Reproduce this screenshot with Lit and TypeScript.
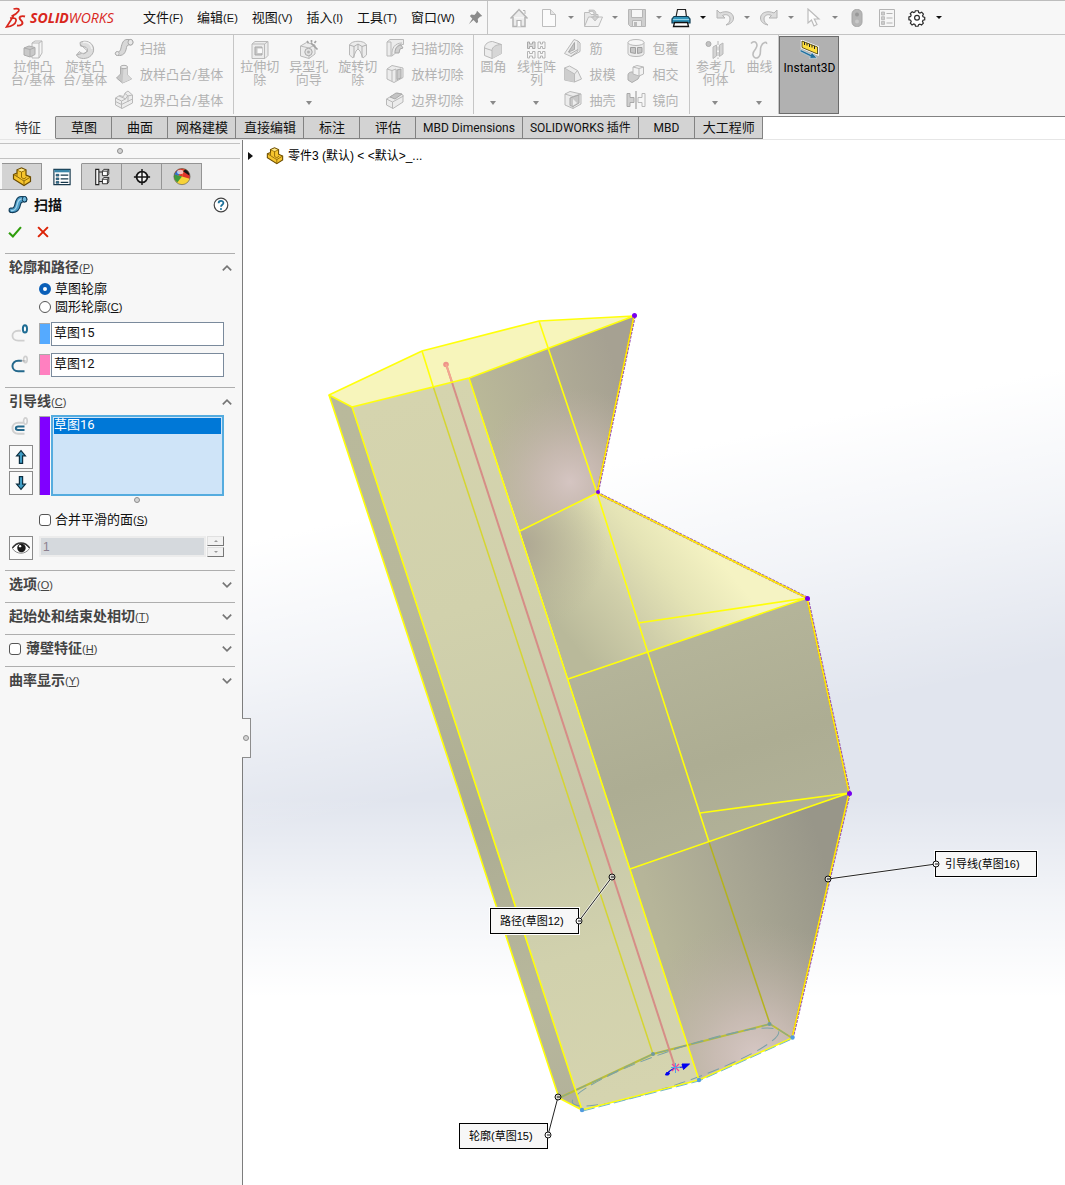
import { LitElement, html, svg, css, nothing, TemplateResult } from "lit";
import { customElement, property, state } from "lit/decorators.js";
import { classMap } from "lit/directives/class-map.js";
import { styleMap } from "lit/directives/style-map.js";

type Glyph = TemplateResult;

/* Shaded isometric pieces used by the greyed-out command icons. */
const G1 = "#ececec";
const G2 = "#d6d6d6";
const LN = "#b9b9b9";

const glyphs: Record<string, Glyph> = {
  home: svg`<path d="M1.5 10.5 10 1.5l8.500 9M4 9v9.500h12V9" fill="#ececec" stroke="#b4b4b4" stroke-width="1.500"/><path d="M14 2.500h2V6" fill="none" stroke="#b4b4b4"/><path d="M8 18.500v-6h4v6" fill="#fff" stroke="#b4b4b4" stroke-width="1.200"/>`,
  file: svg`<path d="M3.500 1.500h8l5 5v12h-13z" fill="#fbfbfb" stroke="#bdbdbd"/><path d="M11.500 1.500v5h5" fill="#e6e6e6" stroke="#bdbdbd"/>`,
  open: svg`<path d="M1.500 18V4.500h5l1.500 2h7V9" fill="#e8e8e8" stroke="#bdbdbd"/><path d="m1.500 18.500 4-9.500h14l-4 9.500z" fill="#f2f2f2" stroke="#bdbdbd"/><path d="M6 2h4c2 0 3 2 3 4v3h2.500L12 13 8.500 9H11V6c0-1.500-1-2.500-2.500-2.500H6z" fill="#d0d0d0" stroke="#b4b4b4" stroke-width=".7"/>`,
  save: svg`<path d="M1.500 1.500h17v17h-15l-2-2z" fill="#cfcfcf" stroke="#b6b6b6"/><path d="M4.500 1.500h11v8h-11z" fill="#f6f6f6" stroke="#b6b6b6"/><path d="M5.500 12.500h9v6h-9z" fill="#efefef" stroke="#b6b6b6"/><path d="M7 14h3v4.500H7z" fill="#bbb"/>`,
  print: svg`<path d="M5 9 6.500 1.500h8L15.500 9z" fill="#f7f7f7" stroke="#222" stroke-width="1.200"/><path d="M3 8.500h14l2 2.500v4H1v-4z" fill="#3193b8" stroke="#0d3b52" stroke-width="1.200"/><path d="M2 11.500h16" stroke="#8fd0e6"/><path d="M3.500 14.500h13l1 4h-15z" fill="#fff" stroke="#111" stroke-width="1.300"/>`,
  undo: svg`<path d="M2 2v8h8L7.500 7.500c4-2 7.500 0 7.500 3.500 0 2.500-1.500 4.500-4 6 5-1 7.500-3.500 7.500-7 0-5.500-7-8-13.500-5z" fill="#dcdcdc" stroke="#b4b4b4"/>`,
  redo: svg`<path d="M18 2v8h-8l2.500-2.500c-4-2-7.500 0-7.500 3.500 0 2.500 1.500 4.500 4 6-5-1-7.500-3.500-7.500-7 0-5.500 7-8 13.500-5z" fill="#dcdcdc" stroke="#b4b4b4"/>`,
  cursor: svg`<path d="M5 1v14l3.500-3 2.500 6 3-1.500-2.700-5.500H16z" fill="#fdfdfd" stroke="#bcbcbc" stroke-width="1.200"/>`,
  pill: svg`<rect x="5" y="1.500" width="10" height="17" rx="4.500" fill="#b5b5b5" stroke="#a6a6a6"/><circle cx="10" cy="6.500" r="2" fill="#989898"/><circle cx="10" cy="13.500" r="2" fill="#c9c9c9"/>`,
  list: svg`<path d="M2.500 1.500h15v17h-15z" fill="#f6f6f6" stroke="#b4b4b4"/><path d="M4.500 4h3v3h-3zM4.500 8.700h3v3h-3zM4.500 13.400h3v3h-3z" fill="#ccc" stroke="#b4b4b4" stroke-width=".8"/><path d="M9.500 5.500h6m-6 4.500h6m-6 5h6" stroke="#b4b4b4"/>`,
  gear: svg`<path d="M8.300 2.500h3.400l.5 2 1.500.7 2-1 2 2.200-1 1.900.6 1.300 1.900.6v2.800l-2 .6-.6 1.500 1 1.900-2.100 2-1.900-1-1.500.6-.6 1.900H8.500l-.6-2-1.500-.6-1.900 1.100-2-2.100 1-1.900-.7-1.500-2-.6V9.600l2-.5.6-1.500-1-1.800 2.200-2.100 1.800 1 1.400-.6z" transform="translate(1.200 .6) scale(.86)" fill="#fff" stroke="#2b2b2b" stroke-width="1.400"/><circle cx="10" cy="9.800" r="2.400" fill="#fff" stroke="#2b2b2b" stroke-width="1.200"/>`,
  pin: svg`<path d="m12 1 7 7-3 1-3 3 .5 4-2 1.500-4.200-4.200L1 19l4.800-7.200L2.500 8 4.500 6l4 .7L11 4z" fill="#8b8b8b"/>`,
  extrude: svg`<path d="m9 3 3-2h7v12l-3 5H9z" fill="#f5f5f5" stroke="${LN}"/><path d="M9 3h7v15M16 3l3-2" fill="none" stroke="${LN}"/><path d="m1 8 5-2 6 1.500v7L7 17l-6-2z" fill="#c9c9c9" stroke="#acacac"/><path d="m1 8 6 1.500 5-2M7 9.500V17" fill="none" stroke="#acacac"/>`,
  revolve: svg`<path d="M5 2.500C10-.5 17.500 2 18.500 8c1 6-4 10.500-10 10.500-3 0-6-1-7-3.500l3-3.500c2 2.500 6 2.500 7.500 0 1-2 0-4-2-4.500L5.500 6z" fill="#dcdcdc" stroke="#b0b0b0"/><path d="M5 4 12.500 11l-4 3M1.500 15l5-1.500" fill="none" stroke="#b0b0b0"/><path d="M8 2.500c5-1 8.500 2 9 6.500" fill="none" stroke="#f1f1f1" stroke-width="1.500"/>`,
  sweep: svg`<path d="M3.500 17.500c-2.500 0-3-3-1-3.700 3 .7 4-1 4.500-3.800C8 5 9.500 1.500 13 1.500h4c2.500 1 2.500 5 0 5.500-3-.5-4 0-4.500 2.500-1 6-3.500 8.500-9 8z" fill="#d8d8d8" stroke="#a9a9a9"/><ellipse cx="16.500" cy="4.200" rx="2.500" ry="2.800" fill="#e8e8e8" stroke="#a9a9a9"/><ellipse cx="3.300" cy="15.500" rx="1.800" ry="2" fill="#e8e8e8" stroke="#a9a9a9" stroke-width=".8"/>`,
  loft: svg`<path d="M6.500 3v7L2.500 14l6 5 9-4-4-4V3z" fill="#c6c6c6" stroke="#adadad"/><path d="M9.500 4.500 8.500 19l9-4-4-4V3z" fill="#d9d9d9"/><ellipse cx="10" cy="3" rx="3.500" ry="1.700" fill="#ececec" stroke="#adadad"/>`,
  boundary: svg`<path d="m1.500 8 4-2.500 4 1L11 3l3-2 4.500 4v8L8 18.500 1.500 15z" fill="${G1}" stroke="${LN}"/><path d="m1.500 8 6 3 4-2 2-3 5-1M7.500 11v7.500M5 6l7 3M1.500 11.500l6 3L18.500 9M11 3.500l3 2.500v6" fill="none" stroke="${LN}"/>`,
  cutExtrude: svg`<path d="m2 4 3-2.500h13v14L15 18.500H2z" fill="${G1}" stroke="${LN}"/><path d="M2 4h12.500v14.500M14.500 4 18 1.500" fill="none" stroke="${LN}"/><path d="M5 7h7v8H5z" fill="#c6c6c6" stroke="#a9a9a9"/><path d="M7.500 8.500H12V13H7.500z" fill="#fafafa"/>`,
  hole: svg`<path d="m1.500 6 6-3.500L16 5v9l-6 4.500L1.500 16z" fill="${G1}" stroke="${LN}"/><path d="m1.500 6 8.500 2 6-3M10 8v10.500" fill="none" stroke="${LN}"/><circle cx="9.500" cy="12" r="3.700" fill="#e2e2e2" stroke="#a9a9a9"/><circle cx="9.500" cy="12" r="1.500" fill="#b4b4b4"/><path d="m12 3 6.500 6.500M8 1l1.500 2M12.500 0v2.500M17 1l-1.500 2" stroke="#a2a2a2" stroke-width="1.700"/>`,
  cutRevolve: svg`<path d="M1.500 5c2-5 15-5 17 0v10l-3.500 3-3-7-2-2-2 2-3 7-3.500-3z" fill="${G1}" stroke="${LN}"/><path d="M1.500 5 6 6.500 10 4l4 2.500L18.500 5M6 6.500v11M14 6.500v11M10 4v5" fill="none" stroke="#b0b0b0"/>`,
  cutSweep: svg`<path d="m2 4 3-2.500h13.500v5C13 6 10 9 10.500 15l-3.500 3H2z" fill="${G1}" stroke="${LN}"/><path d="M2 4h4v14M7 17c-.5-7 3-12 10-12" fill="none" stroke="${LN}"/><path d="M10 15c-.5-4 3-8 6-8l2 3-3 1-1 4z" fill="#d0d0d0" stroke="#a9a9a9"/>`,
  cutLoft: svg`<path d="m2 5 5-3.500L18 4v9.500L9 18.500 2 15z" fill="${G1}" stroke="${LN}"/><path d="m2 5 5 1.500v11M7 6.500 11 5v12" fill="none" stroke="${LN}"/><path d="m12 6 4-1v9l-4 1.500z" fill="#cacaca" stroke="#a9a9a9"/>`,
  cutBoundary: svg`<path d="m1.500 9 5-3 4 1 2-4 5.500 2v7L8 18.500 1.500 15z" fill="${G1}" stroke="${LN}"/><path d="m1.500 9 6 3 11-6M7.500 12v6.500" fill="none" stroke="${LN}"/><path d="m5 7 6-4 6 1-7 5z" fill="#c4c4c4" stroke="#a9a9a9"/>`,
  fillet: svg`<path d="M1.500 8c0-4 4-6.500 8-6.500l9 3v9L9 18.500l-7.500-3z" fill="${G1}" stroke="${LN}"/><path d="M9 10.500c0-3.500 4-6 9.500-6v9L9 18.500z" fill="${G2}"/><path d="M1.500 8 9 10.500c0-3.500 4-6 9.500-6M9 10.500v8" fill="none" stroke="${LN}"/>`,
  pattern: svg`<path d="M1.500 2h2v2h3V2H9v6.500H6.500v-2h-3v2h-2z" fill="#dcdcdc" stroke="#a9a9a9"/><path d="M12 2h2.500v2h2V2H19v6.500h-2.500v-2h-2v2H12zM1.500 11.500h2v2h3v-2H9V18H6.500v-2h-3v2h-2zM12 11.500h2.500v2h2v-2H19V18h-2.500v-2h-2v2H12z" fill="#f8f8f8" stroke="#b4b4b4"/>`,
  rib: svg`<path d="m11 1.500 4 1.500v10l-7 5.500-6.500-3z" fill="#ededed" stroke="${LN}"/><path d="M11.500 4.500 5.500 14l6-2.500z" fill="#c4c4c4" stroke="#a9a9a9"/><path d="M15 3l2 2v8.500L8 18.500M5.500 14 8 15.500l7-4" fill="none" stroke="#b0b0b0"/>`,
  draft: svg`<path d="m1.500 4 5-2 8 4.500 4 8.500-7 3-10-2z" fill="${G1}" stroke="${LN}"/><path d="M1.500 4.500 11.500 10v8l-10-2z" fill="#cdcdcd"/><path d="m1.500 4 10 6 3-3.500M11.500 10v8" fill="none" stroke="${LN}"/>`,
  shell: svg`<path d="M2 4 7 1.500 18 4v10l-8 4.500-8-3.500z" fill="${G1}" stroke="${LN}"/><path d="m2 4 8 2.500L18 4M10 6.500v12" fill="none" stroke="${LN}"/><path d="m7 8 9-3v8l-6 3.500-3-1z" fill="#c8c8c8" stroke="#a9a9a9"/><path d="m10 9 4 4-4 2.500z" fill="#eee"/>`,
  wrap: svg`<path d="M2 4.500v11c0 4 16 4 16 0v-11" fill="${G1}" stroke="${LN}"/><ellipse cx="10" cy="4.500" rx="8" ry="3" fill="#f7f7f7" stroke="${LN}"/><path d="M4.500 9.500h5v6l-5-1zM11.500 9.500h4.500v5l-4.500 1z" fill="#c6c6c6" stroke="#a0a0a0"/>`,
  intersect: svg`<path d="M2 11c0-3 5-4 7-2l5 2-2 4-6 3.500L2 16z" fill="#cdcdcd" stroke="#adadad"/><path d="m7 3 4-1.500L17.500 3v7L13 12 7 10z" fill="#f2f2f2" stroke="${LN}"/><path d="m7 3 6 1.500L17.500 3M13 4.500V12" fill="none" stroke="${LN}"/>`,
  mirror: svg`<path d="M1 3.500h3v4h4v5H4v4H1z" fill="#cfcfcf" stroke="#a9a9a9"/><path d="M19 3.500h-3v4h-4v5h4v4h3z" fill="#f7f7f7" stroke="${LN}"/><path d="M10 1v18" stroke="#a2a2a2" stroke-width="1.200"/>`,
  refgeo: svg`<circle cx="3.500" cy="4" r="2.500" fill="#c2c2c2" stroke="#acacac"/><path d="m8 7 3.500-2v11L8 18.500zM14.500 5 18 3v11l-3.500 2.500z" fill="#d4d4d4" stroke="${LN}"/><path d="M13 1v18" stroke="#b4b4b4" stroke-dasharray="4 1.500"/>`,
  curves: svg`<path d="M2 3.500C6-1 10 4 6.500 9 1 15.500 6 19.500 9 17.500c4-2.500 1.500-7 3-11C14 2 18 1 17.500 4" fill="none" stroke="#bdbdbd" stroke-width="1.600"/>`,
  instant: svg`<path d="m3 1 15.500 6v7L3 7.500z" fill="#ffe14a" stroke="#fff" stroke-width="2.500"/><path d="m3 1 15.500 6v7L3 7.500z" fill="#ffdf3e" stroke="#3a3100" stroke-width=".8"/><path d="M5.500 2v3M8 3v2.500M10.500 4v3M13 5v2.500m2.500-1.500v3" stroke="#222" stroke-width="1"/><path d="m1.500 9.500 10.500 5 .8-2L18 18l-7.500.5 1-1.800L1 11.500z" fill="#1f6d9b" stroke="#d5e6ef" stroke-width=".6"/>`,
  part: svg`<path d="M1.500 7.500 5 6V3l4.500-2L14 3v5l4.500 2v4.500L12 18.500 1.500 12z" fill="#f6c52e" stroke="#6a4b00" stroke-width="1.200"/><path d="m1.500 7.500 3.500 2 4.500 3 2.500 1.500 6.500-4M12 14v4.500M5 3l4.500 2L14 3M9.500 5v5.500l2.500 1.500 2.500-2M5 6v3.500" fill="none" stroke="#8f6a09"/><path d="m5.800 3 3.700-1.500L13 3 9.500 4.500z" fill="#ffe98a"/>`,
  props: svg`<path d="M1 1.500h18v17H1z" fill="#fff" stroke="#17384c" stroke-width="1.300"/><path d="M1.500 2h17v2.800h-17z" fill="#3b86a8"/><path d="M3.500 7h3v2h-3zM3.500 11h3v2h-3zM3.500 15h3v2h-3z" fill="#2f7ea3" stroke="#17384c" stroke-width=".7"/><path d="M8.500 8H17m-8.500 4H17m-8.500 4H17" stroke="#17384c" stroke-width="1.300"/>`,
  config: svg`<path d="M3 1.500h3.500v17H3zM6.500 4.500H11M6.500 15H11" fill="#f6f6f6" stroke="#222" stroke-width="1.200"/><path d="m10.500 3.500 1.500-2h5.500v5L16 8.500h-5.500zM10.500 12.500l1.500-2h5.500v5l-1.500 2h-5.500zM10.500 3.500H16v5M16 3.500l1.500-2M10.500 12.500H16v5m0-5 1.500-2" fill="#fff" stroke="#222"/>`,
  target: svg`<circle cx="10" cy="10" r="6" fill="#f7f7f7" stroke="#161616" stroke-width="2"/><path d="M10 1v18M1 10h18" stroke="#161616" stroke-width="1.600"/>`,
  ball: svg`<circle cx="10" cy="9.500" r="9" fill="#f7d338"/><path d="M10 9.500 1.300 7A9 9 0 0 1 12 .8z" fill="#e0352b"/><path d="M10 9.500 1.300 7a9 9 0 0 0 3.500 9.200z" fill="#3f9b3c"/><path d="M10 9.500 12 .8A9 9 0 0 1 18.500 12z" fill="#e0352b"/><path d="M11 3.500 14 1.500a9 9 0 0 1 4.500 7z" fill="#161616"/><path d="m1.300 7 3.500-4.500L8 5 6 8.500z" fill="#3270c8"/><ellipse cx="8" cy="4.500" rx="3.500" ry="2.500" fill="#fff" opacity=".65"/><circle cx="10" cy="9.500" r="9" fill="none" stroke="#5a5a5a" stroke-width=".7"/>`,
  sweepBlue: svg`<path d="M3.500 17.500c-3 0-3-4-1-4.500 3 .7 4-1 4.500-3.800C8 4 9.500 1.500 13 1.500h4c2.500 1 2.500 5 0 5.500-3-.5-4 0-4.500 2.500-1 6-3.500 8.500-9 8z" fill="#4d9dc8" stroke="#123c58" stroke-width="1.200"/><path d="M3 15.500c4 .5 5.500-2 6.200-6 .6-3.500 2-5.500 4.800-5.500" fill="none" stroke="#9fd3ec" stroke-width="1.300"/><ellipse cx="16.500" cy="4.200" rx="2.300" ry="2.700" fill="#6cb5da" stroke="#123c58"/>`,
  help: svg`<circle cx="10" cy="10" r="8.500" fill="#fff" stroke="#444" stroke-width="1.500"/><path d="M7 7.800C7 3.800 13 4 13 7.500c0 2.200-3 2.200-3 4.700" fill="none" stroke="#1c7099" stroke-width="2.200"/><circle cx="10" cy="15" r="1.300" fill="#1c7099"/>`,
  ok: svg`<path d="m1.500 11 5.500 5.500L18.500 3" fill="none" stroke="#2f9e0c" stroke-width="3"/>`,
  cancel: svg`<path d="m3 3 14 14M17 3 3 17" fill="none" stroke="#dc2104" stroke-width="2.800"/>`,
  profile: svg`<path d="M15 18.500H8c-8.500 0-8.500-11 0-11h3" fill="none" stroke="#cfcfcf" stroke-width="2"/><ellipse cx="15.500" cy="5.500" rx="2.300" ry="4" fill="#fff" stroke="#1f6d94" stroke-width="2.200"/>`,
  path: svg`<path d="M15 18H8C-.5 18-.5 6.500 8 6.500h4" fill="none" stroke="#23688c" stroke-width="2.200"/><ellipse cx="16" cy="5" rx="2" ry="3.500" fill="none" stroke="#cfcfcf" stroke-width="1.800"/><path d="M10 6.500h6" stroke="#777" stroke-dasharray="1.500 1"/>`,
  guide: svg`<path d="M15 18.500H8c-8.500 0-8.500-12 0-12h6" fill="none" stroke="#d0d0d0" stroke-width="2.200"/><ellipse cx="16" cy="4.500" rx="2" ry="3.500" fill="none" stroke="#d0d0d0" stroke-width="1.800"/><path d="M15 14.500H8c-3.500 0-3.500-4 0-4h7" fill="none" stroke="#23688c" stroke-width="2.200"/>`,
  up: svg`<path d="m10 2 5.500 6.500H12V18H8V8.500H4.500z" fill="#3f9cc4" stroke="#0c2f42" stroke-width="1.500"/>`,
  down: svg`<path d="m10 18 5.500-6.500H12V2H8v9.500H4.500z" fill="#3f9cc4" stroke="#0c2f42" stroke-width="1.500"/>`,
  eye: svg`<path d="M.5 10.500C5 3 15 3 19.500 10.500 15 17.500 5 17.500.5 10.500z" fill="#fff" stroke="#777"/><path d="M.5 10C5 2.500 15 2.500 19.500 10" fill="none" stroke="#333" stroke-width="1.600"/><circle cx="10.500" cy="10" r="4.700" fill="#1a1a1a"/><circle cx="9" cy="8" r="1.300" fill="#fff"/>`,
  chevronUp: svg`<path d="m3 14 7-7 7 7" fill="none" stroke="#767676" stroke-width="2.800"/>`,
  chevronDown: svg`<path d="m3 6 7 7 7-7" fill="none" stroke="#767676" stroke-width="2.800"/>`,
};

const icon = (name: string, cls = "i20") =>
  html`<svg class=${cls} viewBox="0 0 20 20" aria-hidden="true">${glyphs[name]}</svg>`;

/* ------------------------------------------------------------------ menu bar */

@customElement("menu-bar")
class MenuBar extends LitElement {
  static styles = css`
    :host { display: flex; align-items: center; height: 33px; border-top: 1px solid #bdbdbd; border-bottom: 1px solid #c4c4c4; background: #f7f7f7; }
    * { box-sizing: border-box; }
    button { border: 0; background: none; padding: 0; font: inherit; color: #111; display: flex; align-items: center; justify-content: center; }
    .brand { display: flex; align-items: center; gap: 4px; width: 143px; padding-left: 5px; color: #d9261c; font: italic 700 14px/20px "Open Sans", sans-serif; flex: none; }
    .brand .thin { font-weight: 400; }
    .mark { width: 21px; height: 22px; flex: none; }
    .menus { display: flex; gap: 14px; padding-top: 1px; }
    .menus button { font-size: 13px; line-height: 18px; align-items: baseline; white-space: nowrap; }
    .key { font-family: "Liberation Sans", sans-serif; font-size: 11px; }
    .pin { width: 15px; height: 15px; margin-left: 13px; flex: none; }
    .rule { width: 1px; align-self: stretch; background: #c4c4c4; margin: 0 21px 0 4px; }
    .tools { display: flex; align-items: center; }
    .i20 { width: 20px; height: 20px; display: block; }
    .space { margin-right: 10px; }
    .drop { width: 24px; height: 20px; }
    .tri { border: 3px solid transparent; border-top: 3px solid #858585; border-bottom: 0; }
    .tri.dark { border-top-color: #111; }
  `;
  private menus = [["文件", "F"], ["编辑", "E"], ["视图", "V"], ["插入", "I"], ["工具", "T"], ["窗口", "W"]];
  private tools: { name: string; label: string; drop?: boolean; dark?: boolean }[] = [
    { name: "home", label: "主页" },
    { name: "file", label: "新建", drop: true },
    { name: "open", label: "打开", drop: true },
    { name: "save", label: "保存", drop: true },
    { name: "print", label: "打印", drop: true, dark: true },
    { name: "undo", label: "撤消", drop: true },
    { name: "redo", label: "重做", drop: true },
    { name: "cursor", label: "选择", drop: true },
    { name: "pill", label: "重建模型" },
    { name: "list", label: "文件属性" },
    { name: "gear", label: "设置", drop: true, dark: true },
  ];
  render() {
    return html`
      <div class="brand">
        <svg class="mark" viewBox="0 0 21 22" aria-hidden="true">
          <path d="M8.500 2c4-1 6.500 0 5 2.200C12.300 6 9.500 8 6.500 9.300" fill="none" stroke="#d9261c" stroke-width="1.700"/>
          <path d="M8.500 9 1.500 20c5.500-.8 9-3.500 9.500-6.200.5-2.500-2-3.300-6-2.800" fill="none" stroke="#d9261c" stroke-width="1.700"/>
          <path d="M20 9.500c-4-1.200-6.500.5-5 2.700l2 2.300c1.500 2.500-1 4.500-5 4" fill="none" stroke="#d9261c" stroke-width="1.900"/>
        </svg>
        <span>SOLID<span class="thin">WORKS</span></span>
      </div>
      <nav class="menus">
        ${this.menus.map(([t, k]) => html`<button>${t}<span class="key">(${k})</span></button>`)}
      </nav>
      ${icon("pin", "pin")}
      <div class="rule"></div>
      <div class="tools">
        ${this.tools.map((t) => html`
          <button class=${classMap({ space: !t.drop })} aria-label=${t.label}>${icon(t.name)}</button>
          ${t.drop ? html`<button class="drop" aria-label=${t.label + "选项"}><span class=${classMap({ tri: true, dark: !!t.dark })}></span></button>` : nothing}
        `)}
      </div>`;
  }
}

/* -------------------------------------------------------------------- ribbon */

interface Big { name: string; lines: string[]; size: string; drop?: boolean }
interface Group { big: Big[]; cols: [string, string][][] }

@customElement("command-ribbon")
class CommandRibbon extends LitElement {
  static styles = css`
    :host { display: flex; height: 81px; background: #f7f7f7; }
    * { box-sizing: border-box; }
    button { border: 0; background: none; padding: 0; font: 13px/13px "Roboto", "Noto Sans CJK SC", sans-serif; color: #b2b2b2; }
    .group { display: flex; height: 79px; border-right: 1px solid #c6c6c6; }
    .first { padding-left: 7px; }
    .second { padding-left: 1px; }
    .big { display: flex; flex-direction: column; align-items: center; padding: 5px 0 9px; white-space: nowrap; }
    .words span { display: block; }
    .w52 { width: 52px; } .w49 { width: 49px; } .w38 { width: 38px; } .w48 { width: 48px; } .w50 { width: 50px; }
    .i20 { width: 20px; height: 20px; display: block; flex: none; }
    .tri { margin-top: auto; border: 3px solid transparent; border-top: 4px solid #8a8a8a; border-bottom: 0; }
    .col { display: flex; flex-direction: column; padding: 0 10px 0 3px; }
    .third .col { padding-right: 11px; }
    .col + .col { padding-left: 0; }
    .small { display: flex; align-items: center; gap: 6px; height: 26px; white-space: nowrap; }
    .instant { width: 60px; height: 78px; margin-top: 1px; background: #b1b1b1; border: 1px solid #6c6c6c; color: #000; font-size: 12px; line-height: 14px; display: flex; flex-direction: column; align-items: center; padding-top: 3px; gap: 1px; }
  `;
  private groups: Group[] = [
    {
      big: [
        { name: "extrude", lines: ["拉伸凸", "台/基体"], size: "w52" },
        { name: "revolve", lines: ["旋转凸", "台/基体"], size: "w52" },
      ],
      cols: [[["sweep", "扫描"], ["loft", "放样凸台/基体"], ["boundary", "边界凸台/基体"]]],
    },
    {
      big: [
        { name: "cutExtrude", lines: ["拉伸切", "除"], size: "w49" },
        { name: "hole", lines: ["异型孔", "向导"], size: "w49", drop: true },
        { name: "cutRevolve", lines: ["旋转切", "除"], size: "w49" },
      ],
      cols: [[["cutSweep", "扫描切除"], ["cutLoft", "放样切除"], ["cutBoundary", "边界切除"]]],
    },
    {
      big: [
        { name: "fillet", lines: ["圆角"], size: "w38", drop: true },
        { name: "pattern", lines: ["线性阵", "列"], size: "w48", drop: true },
      ],
      cols: [
        [["rib", "筋"], ["draft", "拔模"], ["shell", "抽壳"]],
        [["wrap", "包覆"], ["intersect", "相交"], ["mirror", "镜向"]],
      ],
    },
    {
      big: [
        { name: "refgeo", lines: ["参考几", "何体"], size: "w50", drop: true },
        { name: "curves", lines: ["曲线"], size: "w38", drop: true },
      ],
      cols: [],
    },
  ];
  render() {
    return html`
      ${this.groups.map((g, i) => html`
        <div class=${classMap({ group: true, first: i === 0, second: i === 1, third: i === 2 })}>
          ${g.big.map((b) => html`
            <button class="big ${b.size}">
              ${icon(b.name)}
              <span class="words">${b.lines.map((l) => html`<span>${l}</span>`)}</span>
              ${b.drop ? html`<span class="tri"></span>` : nothing}
            </button>`)}
          ${g.cols.map((c) => html`
            <div class="col">${c.map(([n, t]) => html`<button class="small">${icon(n)}<span>${t}</span></button>`)}</div>`)}
        </div>`)}
      <button class="instant" aria-pressed="true">${icon("instant")}<span>Instant3D</span></button>`;
  }
}

/* ---------------------------------------------------------------- ribbon tabs */

@customElement("ribbon-tabs")
class RibbonTabs extends LitElement {
  static styles = css`
    :host { display: flex; height: 23px; background: #fff; }
    button { box-sizing: border-box; height: 23px; min-width: 56px; padding: 0 7px 0 8px; border: 1px solid #828282; border-left: 0; background: #d3d3d3; color: #111; font: 13px/20px "Roboto", "Noto Sans CJK SC", sans-serif; white-space: nowrap; }
    .latin { font-size: 12px; padding: 0 7px; }
    .on { background: #f7f7f7; border-color: #f7f7f7 #828282 #f7f7f7 #f7f7f7; color: #333; }
    .rest { flex: 1; border-top: 1px solid #828282; }
  `;
  @state() private active = 0;
  private tabs = ["特征", "草图", "曲面", "网格建模", "直接编辑", "标注", "评估", "MBD Dimensions", "SOLIDWORKS 插件", "MBD", "大工程师"];
  render() {
    return html`
      ${this.tabs.map((t, i) => html`
        <button class=${classMap({ on: i === this.active, latin: /[A-Z]/.test(t) })} @click=${() => (this.active = i)}>${t}</button>`)}
      <div class="rest"></div>`;
  }
}

/* ------------------------------------------------------------- property panel */

@customElement("panel-section")
class PanelSection extends LitElement {
  static styles = css`
    :host { display: block; margin: 0 7px 0 5px; border-top: 1px solid #aeaeae; padding-bottom: 6px; }
    :host([open]) { padding-bottom: 10px; }
    .head { display: flex; align-items: center; box-sizing: border-box; height: 25px; padding: 2px 2px 0 4px; color: #444; font: 700 14px/20px "Roboto", "Noto Sans CJK SC", sans-serif; }
    .key { font-family: "Liberation Sans", sans-serif; font-size: 11px; font-weight: 400; }
    .key u { text-underline-offset: 1px; }
    input { appearance: none; box-sizing: border-box; width: 12px; height: 12px; margin: 0 5px 0 0; border: 1px solid #555; border-radius: 3px; background: #fff; }
    button { margin-left: auto; border: 0; padding: 0; background: none; }
    .chev { width: 12px; height: 12px; display: block; }
  `;
  @property() label = "";
  @property() key = "";
  @property({ type: Boolean }) open = false;
  @property({ type: Boolean }) tick = false;
  render() {
    const text = html`${this.label}<span class="key">(<u>${this.key}</u>)</span>`;
    return html`
      <div class="head">
        ${this.tick ? html`<input id="tick" type="checkbox" /><label for="tick">${text}</label>` : html`<span>${text}</span>`}
        <button aria-label=${this.label}>${icon(this.open ? "chevronUp" : "chevronDown", "chev")}</button>
      </div>
      <slot></slot>`;
  }
}

@customElement("property-panel")
class PropertyPanel extends LitElement {
  static styles = css`
    :host { display: block; background: #f7f7f7; border-right: 1px solid #7d7d7d; position: relative; font: 13px/18px "Roboto", "Noto Sans CJK SC", sans-serif; color: #111; }
    * { box-sizing: border-box; }
    button { padding: 0; border: 0; background: none; display: flex; align-items: center; justify-content: center; }
    .grip { display: flex; align-items: center; justify-content: center; height: 16px; margin: 3px 2px 0 0; border: solid #c2c2c2; border-width: 1px 0; }
    .dot { width: 6px; height: 6px; border-radius: 50%; border: 1px solid #8d8d8d; background: #d4d4d4; }
    .tabs { display: flex; height: 27px; margin: 4px 2px 0 0; padding-left: 2px; border-bottom: 1px solid #a8a8a8; }
    .tabs button { width: 40px; height: 26px; background: #d3d3d3; border: 1px solid #949494; border-width: 1px 1px 0 0; }
    .tabs .on { background: #f7f7f7; border-top-color: #f7f7f7; height: 27px; }
    .i20 { width: 20px; height: 20px; }
    .i18 { width: 18px; height: 18px; }
    .i16 { width: 16px; height: 16px; }
    .i14 { width: 14px; height: 14px; }
    .title { display: flex; align-items: center; height: 30px; padding: 0 13px 0 8px; gap: 6px; font-size: 14px; font-weight: 700; }
    .title button { margin-left: auto; }
    .confirm { display: flex; gap: 14px; height: 33px; padding: 5px 0 0 8px; align-items: flex-start; }
    .option { display: flex; align-items: center; gap: 4px; height: 18px; padding: 1px 0 0 34px; white-space: nowrap; }
    .key { font-family: "Liberation Sans", sans-serif; font-size: 11px; }
    u { text-underline-offset: 1px; }
    .radio, .check { appearance: none; width: 12px; height: 12px; margin: 0; border: 1px solid #555; background: #fff; }
    .radio { border-radius: 50%; }
    .radio:checked { border: 4px solid #0a5fb8; }
    .check { border-radius: 3px; }
    .row { display: flex; align-items: flex-start; margin-top: 7px; padding: 0 11px 0 4px; }
    .lead { width: 30px; flex: none; padding: 2px 0 0 2px; height: 24px; }
    .swatch { width: 11px; height: 21px; margin-top: 1px; flex: none; border: 1px solid #a9a9a9; border-width: 1px 0 0 1px; }
    .pick { flex: 1; min-width: 0; height: 24px; margin: 0 0 0 1px; border: 1px solid #7a8a9c; background: #fff; padding: 0 2px 5px; font: 13px/16px "Roboto", "Noto Sans CJK SC", sans-serif; color: #111; }
    .guides { display: flex; margin-top: 2px; padding: 0 11px 0 4px; height: 81px; }
    .stack { display: flex; flex-direction: column; width: 30px; flex: none; gap: 2px; }
    .stack .icon { height: 28px; padding: 2px 0 0 2px; }
    .box { width: 24px; height: 24px; border: 1px solid #8a8a8a; background: #fafafa; flex: none; }
    .tall { height: 79px; }
    .options { flex: 1; margin: 0 0 0 1px; padding: 1px; list-style: none; border: 2px solid #55acdf; background: #cfe4f8; }
    .options li { height: 16px; padding: 0; line-height: 14px; background: #0078d7; color: #fff; }
    .drag { display: flex; justify-content: center; height: 14px; padding: 1px 0 0 34px; }
    .preview { display: flex; align-items: flex-start; margin-top: 8px; padding: 0 11px 0 4px; }
    .num { flex: 1; min-width: 0; height: 21px; margin: 0; border: 2px solid #ececec; background: #d5d9dd; color: #8b808e; font: 12px/16px "Liberation Sans", sans-serif; padding: 0 2px; }
    .gap { width: 6px; flex: none; }
    .spin { width: 17px; margin-left: 1px; }
    .spin button { width: 17px; height: 10px; border: 1px solid #e0e0e0; border-right-color: #777; border-bottom-color: #777; background: #f2f2f2; margin-bottom: 1px; }
    .tri { border: 2px solid transparent; border-bottom: 2px solid #999; border-top: 0; }
    .tri.dn { border-top: 2px solid #999; border-bottom: 0; }
    .handle { position: absolute; left: 100%; top: 578px; width: 9px; height: 40px; border: 1px solid #8d8d8d; border-left: 0; background: #f7f7f7; z-index: 2; }
  `;
  render() {
    return html`
      <div class="grip"><span class="dot"></span></div>
      <div class="tabs">
        <button aria-label="设计树">${icon("part")}</button>
        <button class="on" aria-label="属性">${icon("props", "i18")}</button>
        <button aria-label="配置">${icon("config", "i18")}</button>
        <button aria-label="尺寸">${icon("target", "i18")}</button>
        <button aria-label="外观">${icon("ball", "i18")}</button>
      </div>
      <div class="title">
        ${icon("sweepBlue")}<span>扫描</span>
        <button aria-label="帮助">${icon("help", "i16")}</button>
      </div>
      <div class="confirm">
        <button aria-label="确定">${icon("ok", "i14")}</button>
        <button aria-label="取消">${icon("cancel", "i14")}</button>
      </div>

      <panel-section label="轮廓和路径" key="P" open>
        <div class="option"><input class="radio" type="radio" name="p" id="r1" checked /><label for="r1">草图轮廓</label></div>
        <div class="option"><input class="radio" type="radio" name="p" id="r2" /><label for="r2">圆形轮廓<span class="key">(<u>C</u>)</span></label></div>
        <div class="row">
          <label class="lead" for="profile" aria-label="轮廓">${icon("profile", "i18")}</label>
          <span class="swatch" style=${styleMap({ background: "#55aaff" })}></span>
          <input class="pick" id="profile" value="草图15" />
        </div>
        <div class="row">
          <label class="lead" for="path" aria-label="路径">${icon("path", "i18")}</label>
          <span class="swatch" style=${styleMap({ background: "#ff80c0" })}></span>
          <input class="pick" id="path" value="草图12" />
        </div>
      </panel-section>

      <panel-section label="引导线" key="C" open>
        <div class="guides">
          <div class="stack">
            <span class="icon">${icon("guide", "i18")}</span>
            <button class="box" aria-label="上移">${icon("up", "i16")}</button>
            <button class="box" aria-label="下移">${icon("down", "i16")}</button>
          </div>
          <span class="swatch tall" style=${styleMap({ background: "#8000ff" })}></span>
          <ul class="options" role="listbox" aria-label="引导线"><li role="option" aria-selected="true">草图16</li></ul>
        </div>
        <div class="drag"><span class="dot"></span></div>
        <div class="option"><input class="check" type="checkbox" id="merge" /><label for="merge">合并平滑的面<span class="key">(<u>S</u>)</span></label></div>
        <div class="preview">
          <button class="box" aria-label="显示截面">${icon("eye", "i18")}</button>
          <span class="gap"></span>
          <input class="num" aria-label="截面数" value="1" disabled />
          <div class="spin">
            <button aria-label="增加"><span class="tri"></span></button>
            <button aria-label="减少"><span class="tri dn"></span></button>
          </div>
        </div>
      </panel-section>

      <panel-section label="选项" key="O"></panel-section>
      <panel-section label="起始处和结束处相切" key="T"></panel-section>
      <panel-section label="薄壁特征" key="H" tick></panel-section>
      <panel-section label="曲率显示" key="Y"></panel-section>
      <button class="handle" aria-label="折叠面板"><span class="dot"></span></button>`;
  }
}

/* ------------------------------------------------------------- graphics area */

const callouts = [
  { text: "路径(草图12)", x: 247, y: 768, w: 89, from: [336, 781], to: [369, 737] },
  { text: "引导线(草图16)", x: 692, y: 711, w: 102, from: [693, 724], to: [585, 739] },
  { text: "轮廓(草图15)", x: 216, y: 983, w: 89, from: [305, 995], to: [315, 957] },
];

@customElement("graphics-area")
class GraphicsArea extends LitElement {
  static styles = css`
    :host {
      display: block; position: relative; overflow: hidden; min-height: 1045px;
      background:
        linear-gradient(to bottom, rgba(255, 255, 255, 0) 63%, rgba(255, 255, 255, 0.6) 73%, #fff 82%),
        linear-gradient(168deg, #fff 33%, rgba(255, 255, 255, 0.6) 44%, rgba(255, 255, 255, 0) 57%),
        #e1e5ee;
    }
    * { box-sizing: border-box; }
    .scene { position: absolute; left: 0; top: 0; }
    .tree { position: relative; display: flex; align-items: center; gap: 4px; padding: 4px 0 0 5px; font: 12px/22px "Liberation Sans", "Noto Sans CJK SC", sans-serif; color: #000; }
    .name { padding-top: 1px; }
    .tri { border: 4px solid transparent; border-left: 5px solid #111; border-right: 0; }
    .expand { border: 0; padding: 0; background: none; width: 14px; display: flex; }
    .i20 { width: 18px; height: 18px; }
    .note { position: absolute; height: 26px; border: 1px solid #000; background: #f7f7f7; box-shadow: 0 0 0 1px #fff; padding-left: 9px; font: 11px/24px "Liberation Sans", "Noto Sans CJK SC", sans-serif; color: #000; white-space: nowrap; }
  `;
  render() {
    return html`
      <svg class="scene" width="822" height="1045" viewBox="243 140 822 1045" aria-label="扫描预览">
        <defs>
          <linearGradient id="mid" gradientUnits="userSpaceOnUse" x1="400" y1="400" x2="600" y2="1100">
            <stop offset="0" stop-color="#d5d4ae"/><stop offset=".3" stop-color="#d1d1ac"/><stop offset=".62" stop-color="#c7c8a9"/><stop offset=".8" stop-color="#d1d1ad"/><stop offset="1" stop-color="#d5d4af"/>
          </linearGradient>
          <linearGradient id="side" gradientUnits="userSpaceOnUse" x1="340" y1="400" x2="570" y2="1100">
            <stop offset="0" stop-color="#b9b99b"/><stop offset=".3" stop-color="#b8b89b"/><stop offset=".6" stop-color="#acac93"/><stop offset=".85" stop-color="#b8b89c"/><stop offset="1" stop-color="#b3b29a"/>
          </linearGradient>
          <linearGradient id="upper" gradientUnits="userSpaceOnUse" x1="485" y1="440" x2="625" y2="395">
            <stop offset="0" stop-color="#bab998"/><stop offset=".5" stop-color="#b1ad97"/><stop offset="1" stop-color="#a6a192"/>
          </linearGradient>
          <radialGradient id="rose1" gradientUnits="userSpaceOnUse" cx="570" cy="482" r="95">
            <stop offset="0" stop-color="#d5c5c2"/><stop offset=".35" stop-color="#cbbbb5" stop-opacity=".8"/><stop offset="1" stop-color="#bdb0a5" stop-opacity="0"/>
          </radialGradient>
          <linearGradient id="lit" gradientUnits="userSpaceOnUse" x1="590" y1="665" x2="720" y2="560">
            <stop offset="0" stop-color="#b9b99a"/><stop offset=".4" stop-color="#d0cfaa"/><stop offset=".7" stop-color="#e5e4b6"/><stop offset="1" stop-color="#f5f3c3"/>
          </linearGradient>
          <radialGradient id="dusk" gradientUnits="userSpaceOnUse" cx="522" cy="545" r="85">
            <stop offset="0" stop-color="#aea793"/><stop offset="1" stop-color="#b6b397" stop-opacity="0"/>
          </radialGradient>
          <linearGradient id="flat" gradientUnits="userSpaceOnUse" x1="650" y1="640" x2="720" y2="850">
            <stop offset="0" stop-color="#b5b59a"/><stop offset=".6" stop-color="#adad93"/><stop offset="1" stop-color="#b1b198"/>
          </linearGradient>
          <linearGradient id="lower" gradientUnits="userSpaceOnUse" x1="660" y1="930" x2="830" y2="875">
            <stop offset="0" stop-color="#b6b599"/><stop offset=".5" stop-color="#a8a693"/><stop offset="1" stop-color="#989689"/>
          </linearGradient>
          <radialGradient id="rose2" gradientUnits="userSpaceOnUse" cx="755" cy="1056" r="135">
            <stop offset="0" stop-color="#d6c7c4"/><stop offset=".3" stop-color="#ccbdb7" stop-opacity=".85"/><stop offset="1" stop-color="#b5aa9f" stop-opacity="0"/>
          </radialGradient>
        </defs>

        <polygon points="329,395 352,407 582,1110 559,1098" fill="url(#side)"/>
        <polygon points="352,407 469,378 699,1080 582,1110" fill="url(#mid)"/>
        <polygon points="469,378 634,316 597,493 520,531" fill="url(#upper)"/>
        <polygon points="469,378 634,316 597,493 520,531" fill="url(#rose1)"/>
        <polygon points="520,531 597,493 807,598 568,679" fill="url(#lit)"/>
        <polygon points="520,531 597,493 807,598 568,679" fill="url(#dusk)"/>
        <polygon points="568,679 807,598 849,793 630,869" fill="url(#flat)"/>
        <polygon points="630,869 849,793 792,1038 699,1080" fill="url(#lower)"/>
        <polygon points="630,869 849,793 792,1038 699,1080" fill="url(#rose2)"/>
        <polygon points="329,395 422,351 539,321 634,316 469,378 352,407" fill="#f7f5bb"/>

        <g fill="none" stroke-width="1.500">
          <path d="M433 386 653 1054" stroke="#d5d532"/>
          <path d="m709 842 61 182" stroke="#b5b31d"/>
          <path d="m559 1098 94-44 117-30 22 14" stroke="#bdbf35" stroke-width="2"/>
          <path d="m559 1098 94-44 117-30 22 14" stroke="#7fa59b" stroke-width="1" stroke-dasharray="12 6"/>
          <ellipse cx="675.500" cy="1067" rx="109" ry="17" transform="rotate(-19 675.500 1067)" stroke="#7ba1a6" stroke-width="1" stroke-dasharray="12 6"/>
        </g>
        <path d="m446 364 229 703" stroke="#d68d87" stroke-width="2" fill="none"/>
        <circle cx="446" cy="364.500" r="2.800" fill="#ef9389"/>
        <path d="m446 364 6 18" stroke="#f4a78f" stroke-width="2"/>

        <path d="m634.500 316-37 177 210 105 42 195-57 245" fill="none" stroke="#9650b4" stroke-width="2.600" stroke-dasharray="3 1"/>
        <g fill="none" stroke="#ffff0a" stroke-width="1.600" stroke-linejoin="round">
          <path d="M329 395 422 351 539 321 634 316 469 378 352 407z"/>
          <path d="M329 395 559 1098 582 1110 352 407M469 378 699 1080M422 351l11 35"/>
          <path d="m539 321 58 172 51 160 61 189M520 531l77-38M568 679l239-81M638 623l169-25M630 869l219-76M700 813l149-20"/>
          <path d="m582 1110 117-30 93-42"/>
          <path d="m634 316-37 177 210 105 42 195-57 245" stroke="#ffe800"/>
        </g>
        <path d="m583 1111 116-30 93-42" fill="none" stroke="#79b9c0" stroke-width="1" stroke-dasharray="12 4"/>
        <g fill="#7600ee">
          <circle cx="634.500" cy="315.500" r="2.500"/><circle cx="598" cy="492" r="2"/><circle cx="807.500" cy="598.500" r="2.500"/><circle cx="849.500" cy="793.500" r="2.500"/>
        </g>
        <g fill="#529be0">
          <circle cx="792.500" cy="1037.500" r="2.200"/><circle cx="699" cy="1080" r="2.200"/><circle cx="582" cy="1110" r="2.200"/>
          <circle cx="653" cy="1054" r="2" fill="#6f9aa0"/><circle cx="769.500" cy="1024" r="2" fill="#6f9aa0"/>
        </g>
        <path d="M667 1074c4-6 10-7 16-7" fill="none" stroke="#0000e8" stroke-width="1.200"/>
        <path d="m682 1064 7.500 0-6 5.500zM666.500 1072.500l3 .5-1 2h-3z" fill="#0000f0" stroke="#0000f0"/>
        <path d="m672 1064 7 7m0-7-7 7" stroke="#ef3f9a" stroke-width="1.200"/><path d="M675.500 1063v10M671 1067.500h9" stroke="#4fa5e8"/>
      </svg>

      <div class="tree">
        <button class="expand" aria-label="展开"><span class="tri"></span></button>
        ${icon("part")}
        <span class="name">零件3 (默认) &lt; &lt;默认&gt;_...</span>
      </div>

      ${callouts.map((c) => html`<div class="note" style=${styleMap({ left: c.x + "px", top: c.y + "px", width: c.w + "px" })}>${c.text}</div>`)}
      <svg class="scene" width="822" height="1045" viewBox="0 0 822 1045" aria-hidden="true">
        ${callouts.map(({ from: [x1, y1], to: [x2, y2] }) => svg`
          <path d="M${x1} ${y1}L${x2} ${y2}" stroke="#fff" stroke-width="2.500" opacity=".7"/>
          <path d="M${x1} ${y1}L${x2} ${y2}" stroke="#222"/>
          <circle cx=${x1} cy=${y1} r="3" fill="#f7f7f7" stroke="#111"/>
          <circle cx=${x2} cy=${y2} r="3" fill="#d5d5cd" stroke="#111"/>
          <path d="M${x2 - 1} ${y2}h3M${x1 - 1} ${y1}h3" stroke="#111"/>`)}
      </svg>`;
  }
}

/* --------------------------------------------------------------------- shell */

@customElement("app-root")
class AppRoot extends LitElement {
  static styles = css`
    :host { display: flex; flex-direction: column; min-height: 100vh; background: #f7f7f7; font-family: "Roboto", "Noto Sans CJK SC", sans-serif; }
    .work { flex: 1; display: grid; grid-template-columns: 243px minmax(0, 1fr); border-top: 1px solid #e6e6e6; }
  `;
  render() {
    return html`
      <menu-bar></menu-bar>
      <command-ribbon></command-ribbon>
      <ribbon-tabs></ribbon-tabs>
      <main class="work">
        <property-panel></property-panel>
        <graphics-area></graphics-area>
      </main>`;
  }
}
